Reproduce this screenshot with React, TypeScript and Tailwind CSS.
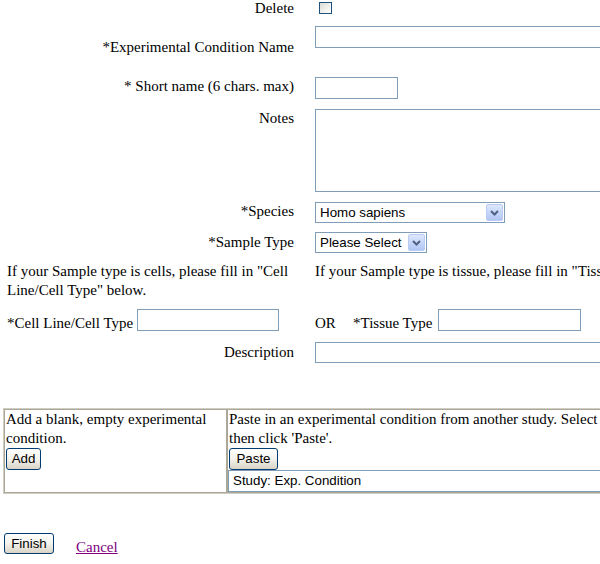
import React from "react"

function XpArrow() {
  return (
    <div className="flex h-[17px] w-[17px] shrink-0 items-center justify-center rounded-[2px] border border-[#b9cbf5] bg-gradient-to-b from-[#dde7fd] to-[#b2c6f4]">
      <svg width="9" height="6" viewBox="0 0 9 6">
        <path d="M1 1 L4.5 4.5 L8 1" fill="none" stroke="#4d6185" strokeWidth="2" />
      </svg>
    </div>
  )
}

function XpSelect({ value, className }: { value: string; className: string }) {
  return (
    <div
      className={`flex shrink-0 items-center justify-between border border-[#7f9db9] bg-white pl-[4px] pr-[1px] font-['Liberation_Sans',Arial,sans-serif] text-[13.33px] leading-[16px] ${className}`}
    >
      <span className="whitespace-nowrap">{value}</span>
      <XpArrow />
    </div>
  )
}

function XpButton({ label, className }: { label: string; className: string }) {
  return (
    <button
      className={`shrink-0 rounded-[3px] border border-[#003c74] bg-gradient-to-b from-white via-[#f3f2ec] to-[#d9d4c6] font-['Liberation_Sans',Arial,sans-serif] text-[13.33px] leading-[16px] text-black ${className}`}
    >
      {label}
    </button>
  )
}

const field = "border border-[#7f9db9] bg-white"

export default function App() {
  return (
    <div className="relative h-[564px] w-[600px] overflow-hidden bg-white font-['Liberation_Serif',serif] text-[15px] leading-[18px] text-black">
      {/* delete */}
      <div className="flex h-[16px] *:shrink-0">
        <div className="w-[294px] text-right leading-[16px]">Delete</div>
        <div className="ml-[25px] mt-[2px] h-[12px] w-[13px] border border-[#1c5180] bg-gradient-to-br from-[#dcdcd6] to-white" />
      </div>

      {/* name */}
      <div className="mt-[10px] flex items-start *:shrink-0">
        <div className="w-[294px] pt-[12px] text-right">*Experimental Condition Name</div>
        <input className={`ml-[21px] h-[22px] w-[320px] ${field}`} />
      </div>

      {/* short name */}
      <div className="mt-[21px] flex items-start *:shrink-0">
        <div className="w-[294px] text-right">* Short name (6 chars. max)</div>
        <input className={`ml-[21px] h-[22px] w-[83px] ${field}`} />
      </div>

      {/* notes */}
      <div className="mt-[10px] flex items-start *:shrink-0">
        <div className="w-[294px] text-right">Notes</div>
        <textarea className={`ml-[21px] block h-[83px] w-[320px] resize-none ${field}`} />
      </div>

      {/* species */}
      <div className="mt-[10px] flex items-start *:shrink-0">
        <div className="w-[294px] text-right">*Species</div>
        <XpSelect value="Homo sapiens" className="ml-[21px] h-[21px] w-[190px]" />
      </div>

      {/* sample type */}
      <div className="mt-[9px] flex items-start *:shrink-0">
        <div className="mt-[1px] w-[294px] text-right">*Sample Type</div>
        <XpSelect value="Please Select" className="ml-[21px] h-[21px] w-[112px]" />
      </div>

      {/* hints */}
      <div className="mt-[9px] flex items-start leading-[19px] *:shrink-0">
        <div className="ml-[7px] w-[288px]">
          If your Sample type is cells, please fill in "Cell Line/Cell Type" below.
        </div>
        <div className="ml-[20px] whitespace-nowrap">
          If your Sample type is tissue, please fill in "Tissue Type" below.
        </div>
      </div>

      {/* cell line / tissue */}
      <div className="mt-[9px] flex items-start *:shrink-0">
        <div className="ml-[7px] w-[130px] whitespace-nowrap pt-[5px]">*Cell Line/Cell Type</div>
        <input className={`h-[22px] w-[142px] ${field}`} />
        <div className="ml-[36px] w-[38px] pt-[5px]">OR</div>
        <div className="w-[85px] whitespace-nowrap pt-[5px]">*Tissue Type</div>
        <input className={`h-[22px] w-[143px] ${field}`} />
      </div>

      {/* description */}
      <div className="mt-[10px] flex items-start *:shrink-0">
        <div className="w-[294px] pt-[1px] text-right">Description</div>
        <input className={`ml-[21px] h-[21px] w-[320px] ${field}`} />
      </div>

      {/* add / paste */}
      <div className="ml-[3px] mt-[45px] flex w-[900px] border border-[#cfccc0] leading-[19px]">
        <div className="w-[223px] shrink-0 border border-[#aca899] px-[1px]">
          <div>Add a blank, empty experimental condition.</div>
          <XpButton label="Add" className="h-[22px] w-[35px]" />
        </div>
        <div className="flex-1 border border-[#aca899] px-[1px]">
          <div className="whitespace-nowrap">
            Paste in an experimental condition from another study. Select from the list below,
            <br />
            then click 'Paste'.
          </div>
          <XpButton label="Paste" className="h-[22px] w-[49px]" />
          <XpSelect value="Study: Exp. Condition" className="-ml-[1px] h-[22px] w-[500px] pl-[4px]" />
        </div>
      </div>

      {/* finish */}
      <div className="mt-[39px] flex items-start *:shrink-0">
        <XpButton label="Finish" className="ml-[4px] h-[21px] w-[50px]" />
        <a href="#" className="ml-[22px] mt-[5px] text-[#800080] underline">
          Cancel
        </a>
      </div>
    </div>
  )
}
